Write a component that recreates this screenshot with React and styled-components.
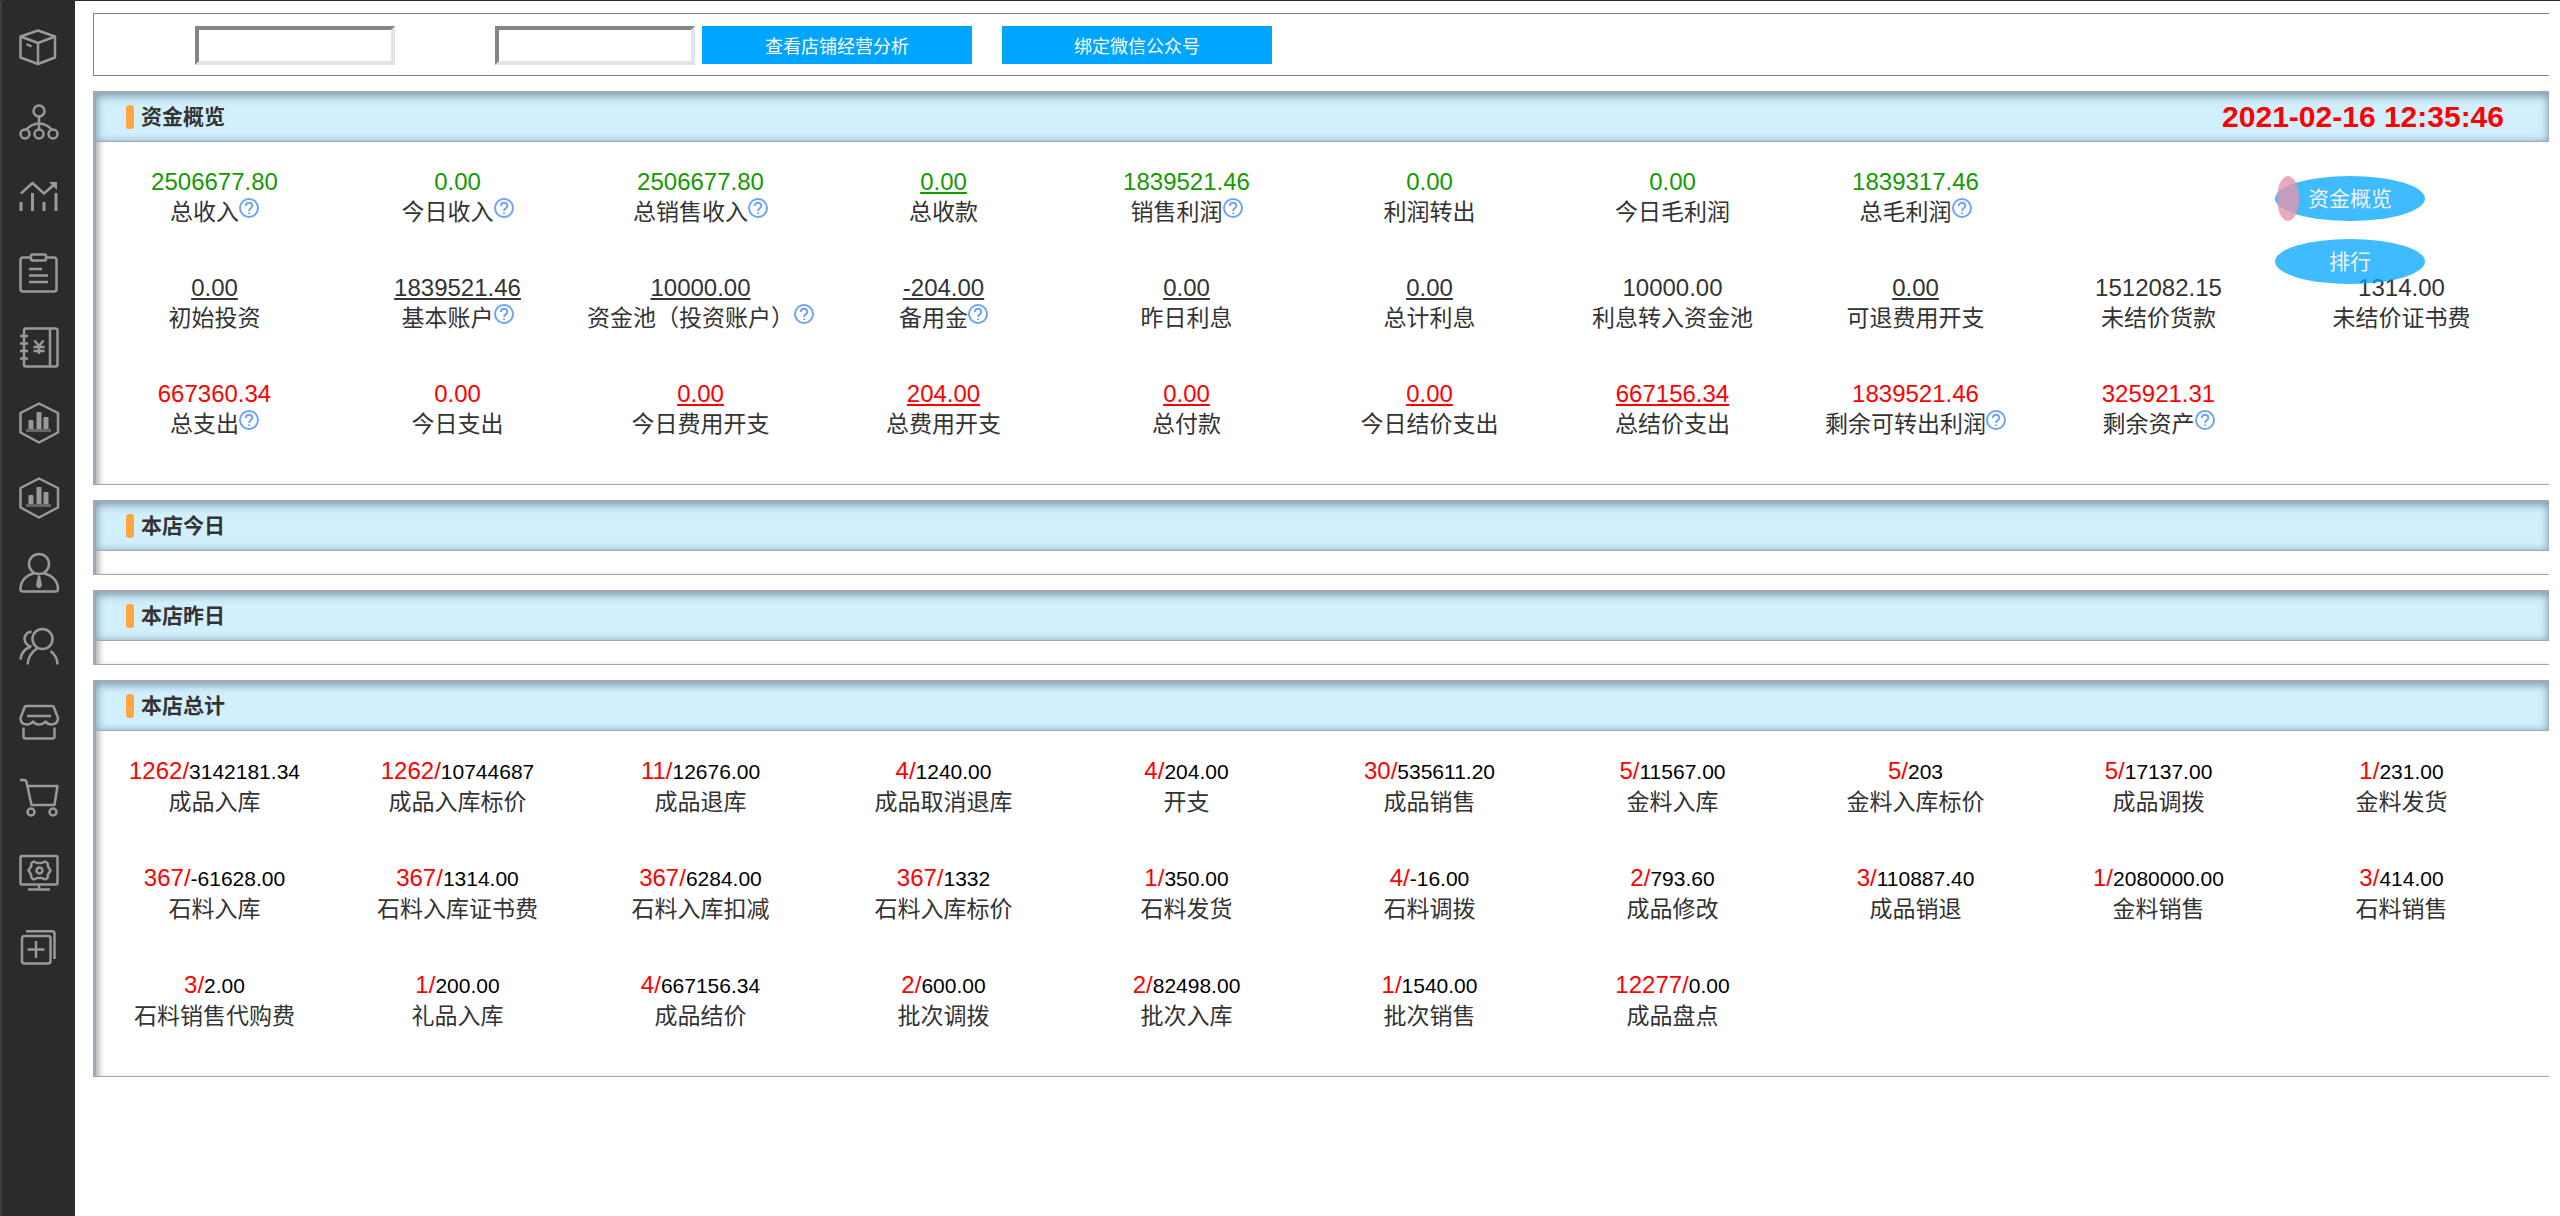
import styled, { createGlobalStyle } from "styled-components";

const funds = [
	{ value: "2506677.80", label: "总收入", tone: "green", help: true },
	{ value: "0.00", label: "今日收入", tone: "green", help: true },
	{ value: "2506677.80", label: "总销售收入", tone: "green", help: true },
	{ value: "0.00", label: "总收款", tone: "green", link: true },
	{ value: "1839521.46", label: "销售利润", tone: "green", help: true },
	{ value: "0.00", label: "利润转出", tone: "green" },
	{ value: "0.00", label: "今日毛利润", tone: "green" },
	{ value: "1839317.46", label: "总毛利润", tone: "green", help: true },
	{ value: "0.00", label: "初始投资", link: true, newRow: true },
	{ value: "1839521.46", label: "基本账户", link: true, help: true },
	{ value: "10000.00", label: "资金池（投资账户）", link: true, help: true },
	{ value: "-204.00", label: "备用金", link: true, help: true },
	{ value: "0.00", label: "昨日利息", link: true },
	{ value: "0.00", label: "总计利息", link: true },
	{ value: "10000.00", label: "利息转入资金池" },
	{ value: "0.00", label: "可退费用开支", link: true },
	{ value: "1512082.15", label: "未结价货款" },
	{ value: "1314.00", label: "未结价证书费" },
	{ value: "667360.34", label: "总支出", tone: "red", help: true, newRow: true },
	{ value: "0.00", label: "今日支出", tone: "red" },
	{ value: "0.00", label: "今日费用开支", tone: "red", link: true },
	{ value: "204.00", label: "总费用开支", tone: "red", link: true },
	{ value: "0.00", label: "总付款", tone: "red", link: true },
	{ value: "0.00", label: "今日结价支出", tone: "red", link: true },
	{ value: "667156.34", label: "总结价支出", tone: "red", link: true },
	{ value: "1839521.46", label: "剩余可转出利润", tone: "red", help: true },
	{ value: "325921.31", label: "剩余资产", tone: "red", help: true },
];

const totals = [
	["1262", "3142181.34", "成品入库"],
	["1262", "10744687", "成品入库标价"],
	["11", "12676.00", "成品退库"],
	["4", "1240.00", "成品取消退库"],
	["4", "204.00", "开支"],
	["30", "535611.20", "成品销售"],
	["5", "11567.00", "金料入库"],
	["5", "203", "金料入库标价"],
	["5", "17137.00", "成品调拨"],
	["1", "231.00", "金料发货"],
	["367", "-61628.00", "石料入库"],
	["367", "1314.00", "石料入库证书费"],
	["367", "6284.00", "石料入库扣减"],
	["367", "1332", "石料入库标价"],
	["1", "350.00", "石料发货"],
	["4", "-16.00", "石料调拨"],
	["2", "793.60", "成品修改"],
	["3", "110887.40", "成品销退"],
	["1", "2080000.00", "金料销售"],
	["3", "414.00", "石料销售"],
	["3", "2.00", "石料销售代购费"],
	["1", "200.00", "礼品入库"],
	["4", "667156.34", "成品结价"],
	["2", "600.00", "批次调拨"],
	["2", "82498.00", "批次入库"],
	["1", "1540.00", "批次销售"],
	["12277", "0.00", "成品盘点"],
];

const HexChart = () => (
	<>
		<path d="M39 18.5 58 28v19.5L39 57.5 20.5 47.5V28z" />
		<path
			className="fill"
			d="M28.5 36q0-1 1-1h3q1 0 1 1v8h-5zM36.5 28q0-1 1-1h3q1 0 1 1v16h-5zM43.5 33q0-1 1-1h3q1 0 1 1v11h-5z"
		/>
		<path className="dim" d="M26 45.5h25" />
	</>
);

const menu = [
	{
		name: "库存",
		icon: (
			<path d="M38 20.5 55 26.5V47.5L38 54 20.5 47.5V26.5zM20.5 26.5 38 33l17-6.5M38 33v21M26.5 34l5 2.5" />
		),
	},
	{
		name: "组织",
		icon: (
			<>
				<circle cx="39" cy="26" r="5.5" />
				<circle cx="25" cy="49" r="4.5" />
				<circle cx="39" cy="49" r="4.5" />
				<circle cx="53" cy="49" r="4.5" />
				<path d="M39 32v12M26.5 44.5Q31 39 39 38.5Q47 39 51.5 44.5" />
			</>
		),
	},
	{
		name: "趋势",
		icon: (
			<>
				<path d="M21 33.5 32.5 23 44 33.5 54 24.5" />
				<path className="fill" d="M49 22h8v8z" />
				<path d="M21 42v9M32.5 33v18M44 42v9M56 33v18" strokeWidth="3" />
			</>
		),
	},
	{
		name: "单据",
		icon: (
			<>
				<path d="M31 22.5H23q-2.5 0-2.5 2.5v29q0 2.5 2.5 2.5h31q2.5 0 2.5-2.5v-29q0-2.5-2.5-2.5h-8" />
				<rect x="31" y="19.5" width="15" height="6" rx="1.5" />
				<path d="M29 34h13M29 40.5h19M29 47h19" />
			</>
		),
	},
	{
		name: "账本",
		icon: (
			<>
				<rect x="24" y="18.5" width="33.5" height="38" rx="2" />
				<path d="M50 18.5v38M20 26h8M20 33.5h8M20 41h8M20 48.5h8" />
				<path d="M34.5 30.5 39 36l4.5-5.5M39 36v8M33.5 37h11M33.5 41h11" />
			</>
		),
	},
	{ name: "报表", icon: <HexChart /> },
	{ name: "统计", icon: <HexChart /> },
	{
		name: "员工",
		icon: (
			<>
				<circle cx="39" cy="29" r="10" />
				<path d="M34 38.5C26 40 20.5 46 20.5 54q0 2.5 2.5 2.5h32.5q2.5 0 2.5-2.5C58 46 52 40 44 38.5" />
				<path className="fill" d="M38 40.5h2L42 50q-.5 3-3 3.5Q36.5 53 36 50z" />
			</>
		),
	},
	{
		name: "客户",
		icon: (
			<>
				<circle cx="42.5" cy="29" r="10" />
				<path d="M37 38.5Q28.5 44 27.5 54.5M50.5 41Q57.5 46.5 57.5 54.5" />
				<path d="M31.5 21.5Q25 22.5 24.5 29Q25 35 31.5 37M30 37Q21.5 40 20.5 49.5" />
			</>
		),
	},
	{
		name: "店铺",
		icon: (
			<>
				<path d="M26 21h26q1.500 0 2 1.500L58 33q0 6-6.500 6.500Q47.500 39.500 45.500 36.500Q43 39.500 39 39.500T33 36.500Q30.500 39.500 27 39.500Q20.500 39.500 20.500 33L24.500 22.500Q25 21 26 21z" />
				<path d="M27 31h24M23.500 42.500V51.500q0 2 2 2h27q2 0 2-2V42.500" />
			</>
		),
	},
	{
		name: "采购",
		icon: (
			<>
				<path d="M20 20h4q2 0 2.5 2L31.5 45H54.5L57.500 26H28" />
				<circle cx="31" cy="52" r="3.5" />
				<circle cx="53" cy="52" r="3.5" />
			</>
		),
	},
	{
		name: "系统",
		icon: (
			<>
				<rect x="20.5" y="21" width="37" height="28.5" rx="1.5" />
				<path d="M39 50v4M28 54.5h22" />
				<path d="M34 26.5l3 1.500h5l3-1.500 2.500 1.500.5 3.500 2.500 4-2.500 4-.5 3.500-2.500 1.500-3-1.500h-5l-3 1.500-2.500-1.500-.5-3.500-2.500-4 2.500-4 .5-3.500z" />
				<circle cx="39.5" cy="35.5" r="3" />
			</>
		),
	},
	{
		name: "新增",
		icon: (
			<>
				<rect x="22" y="26" width="28.5" height="27.5" rx="2.5" />
				<path d="M36 31v17M27.5 39.5h17M26 21.3h26q2.5 0 2.5 2.5V49" />
			</>
		),
	},
];

const HelpIcon = () => (
	<StyledHelp viewBox="0 0 20 20" aria-hidden="true">
		<circle cx="10" cy="10" r="9" />
		<path d="M6.8 8Q7 4.700 10.100 4.700T13.300 7.700Q13.300 9.300 11.500 10.300Q10.200 11.100 10.100 13" />
		<path d="M10.1 14.5v1.5" />
	</StyledHelp>
);

const Panel = ({ title, time, children }) => {
	return (
		<StyledPanel>
			<PanelHead>
				<h2>{title}</h2>
				{time && <time>{time}</time>}
			</PanelHead>
			<PanelBody>{children}</PanelBody>
		</StyledPanel>
	);
};

const App = () => {
	return (
		<>
			<GlobalStyle />
			<Page>
				<Sidebar>
					{menu.map((item) => (
						<a href="#" key={item.name} aria-label={item.name}>
							<svg viewBox="0 0 75 75" strokeWidth="2.5">
								{item.icon}
							</svg>
						</a>
					))}
				</Sidebar>
				<Main>
					<Toolbar>
						<input type="text" aria-label="开始日期" />
						<input type="text" aria-label="结束日期" />
						<div className="actions">
							<button type="button">查看店铺经营分析</button>
							<button type="button">绑定微信公众号</button>
						</div>
					</Toolbar>

					<Panel title="资金概览" time="2021-02-16 12:35:46">
						<StatGrid>
							{funds.map((item) => (
								<Stat key={item.label} $tone={item.tone} $newRow={item.newRow}>
									<p className="value">
										{item.link ? <a href="#">{item.value}</a> : item.value}
									</p>
									<p className="label">
										{item.label}
										{item.help && <HelpIcon />}
									</p>
								</Stat>
							))}
						</StatGrid>
						<FloatMenu>
							<button type="button" className="active">
								资金概览
							</button>
							<button type="button">排行</button>
						</FloatMenu>
					</Panel>

					<Panel title="本店今日" />
					<Panel title="本店昨日" />

					<Panel title="本店总计">
						<StatGrid>
							{totals.map(([count, amount, label]) => (
								<Stat key={label} $tone="red">
									<p className="value">
										{count}/<span>{amount}</span>
									</p>
									<p className="label">{label}</p>
								</Stat>
							))}
						</StatGrid>
					</Panel>
				</Main>
			</Page>
		</>
	);
};

export default App;

const GlobalStyle = createGlobalStyle`
	* {
		box-sizing: border-box;
	}

	body {
		margin: 0;
		background: #fff;
		color: #333;
		font-family: "Liberation Sans", "Noto Sans CJK SC", sans-serif;
	}

	h2, p {
		margin: 0;
	}

	button, input {
		font-family: inherit;
	}
`;

const Page = styled.div`
	display: flex;
	min-height: 100vh;
	border-top: 1px solid #2b2b2b;
`;

const Sidebar = styled.nav`
	flex: none;
	width: 75px;
	padding-top: 9px;
	background: #2b2b2b;
	box-shadow: inset 2px 0 0 #3d3d3d;

	a {
		display: block;
		height: 75px;
	}

	svg {
		display: block;
		width: 75px;
		height: 75px;
		fill: none;
		stroke: #999;
		stroke-linejoin: round;
	}

	.fill {
		fill: #999;
		stroke: none;
	}

	.dim {
		stroke: #666;
		stroke-width: 3;
	}
`;

const Main = styled.main`
	flex: 1;
	min-width: 0;
	padding: 12px 11px 0 18px;
`;

const Toolbar = styled.div`
	display: flex;
	align-items: flex-start;
	padding: 12px 0 10px 1px;
	border: 1px solid #808080;
	border-right: 0;

	input {
		width: 200px;
		height: 39px;
		margin-left: 100px;
		padding: 0 6px;
		border-width: 4px;
		border-style: solid;
		border-color: #858585 #e3e3e3 #e3e3e3 #858585;
		font-size: 18px;
		background: #fff;
	}

	.actions {
		display: flex;
		gap: 30px;
		margin-left: 7px;
	}

	button {
		width: 270px;
		height: 38px;
		padding: 0;
		border: 0;
		background: #00a5ff;
		color: #fff;
		font-size: 18px;
	}
`;

const StyledPanel = styled.section`
	position: relative;
	margin-top: 15px;
	padding-top: 2px;
	border-bottom: 1px solid #a1a9b8;
	box-shadow: inset 3px 2px 0 #a1a9b8, inset 9px 0 6px -3px #b0b0b4;
`;

const PanelHead = styled.header`
	display: flex;
	align-items: center;
	justify-content: space-between;
	height: 49px;
	margin-left: 3px;
	padding: 0 45px 0 30px;
	border-bottom: 1px solid #9dabbb;
	background: #d2effd;
	box-shadow: inset 0 2px 8px 1px #7f98a8;

	h2 {
		display: flex;
		align-items: center;
		gap: 7px;
		font-size: 21px;
		line-height: 30px;
	}

	h2::before {
		content: "";
		width: 8px;
		height: 24px;
		border-radius: 3px;
		background: #ffa640;
	}

	time {
		color: #f00;
		font-size: 30px;
		font-weight: bold;
		line-height: 34px;
	}
`;

const PanelBody = styled.div`
	padding-top: 23px;
`;

const StatGrid = styled.div`
	display: grid;
	grid-template-columns: repeat(10, minmax(0, 1fr));
	row-gap: 46px;
	padding: 2px 26px 45px 0;
`;

const tones = {
	green: "#149a00",
	red: "#f00",
};

const Stat = styled.div`
	${(props) => props.$newRow && "grid-column-start: 1;"}
	display: flex;
	flex-direction: column;
	align-items: center;
	white-space: nowrap;

	.value {
		color: ${(props) => tones[props.$tone] || "#333"};
		font-size: 24px;
		line-height: 30px;
	}

	.value a {
		color: inherit;
	}

	.value span {
		color: #000;
		font-size: 21px;
	}

	.label {
		display: flex;
		font-size: 23px;
		line-height: 30px;
	}
`;

const StyledHelp = styled.svg`
	width: 20px;
	height: 20px;
	margin-top: 1px;
	fill: none;
	stroke: #6ea3f5;
	stroke-width: 2;
`;

const FloatMenu = styled.div`
	position: absolute;
	top: 85px;
	right: 124px;
	display: flex;
	flex-direction: column;
	gap: 18px;

	button {
		position: relative;
		width: 150px;
		height: 45px;
		padding: 0 0 3px;
		border: 0;
		border-radius: 50%;
		background: #00a5ff;
		color: #eee;
		font-size: 21px;
		opacity: 0.75;
	}

	.active::before {
		content: "";
		position: absolute;
		top: 0;
		left: 2px;
		width: 22px;
		height: 45px;
		border-radius: 50%;
		background: rgba(219, 112, 147, 0.8);
	}
`;
